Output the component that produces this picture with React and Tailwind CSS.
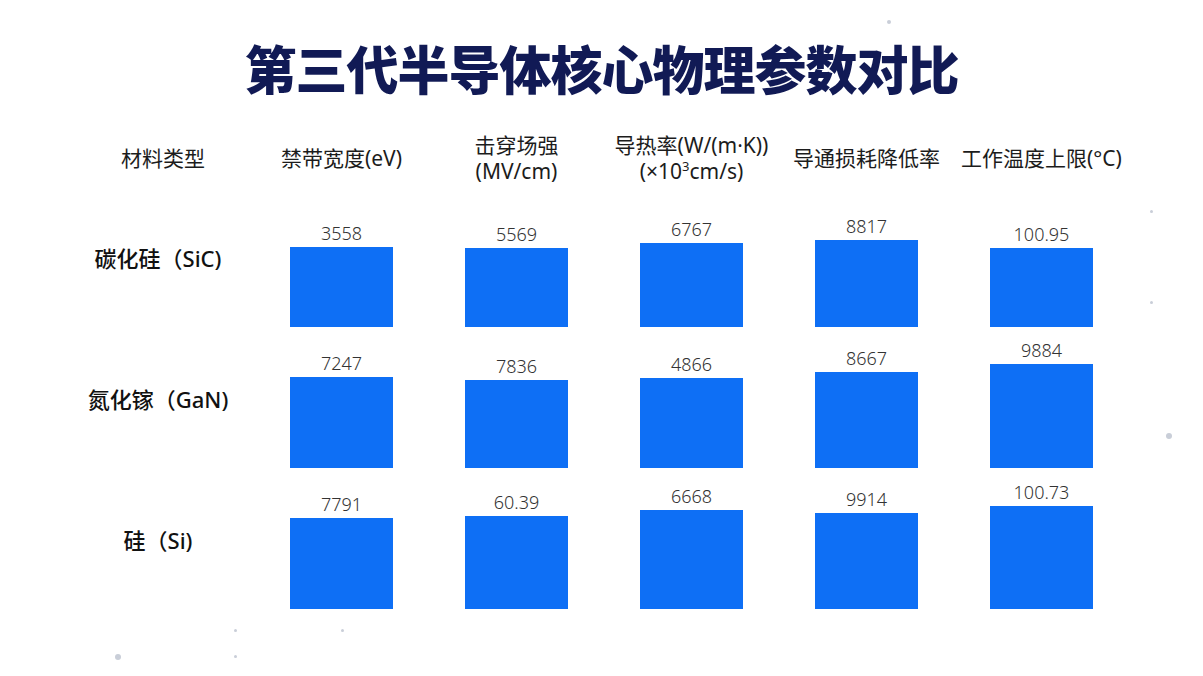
const columns = [
  { key: "band", label: ["禁带宽度(eV)"] },
  { key: "field", label: ["击穿场强", "(MV/cm)"] },
  { key: "thermal", label: ["导热率(W/(m·K))", "(×10³cm/s)"] },
  { key: "loss", label: ["导通损耗降低率"] },
  { key: "temp", label: ["工作温度上限(°C)"] },
];

const rows = [
  {
    name: "碳化硅（SiC)",
    cells: [
      { value: "3558", h: 80 },
      { value: "5569", h: 79 },
      { value: "6767", h: 84 },
      { value: "8817", h: 87 },
      { value: "100.95", h: 79 },
    ],
  },
  {
    name: "氮化镓（GaN)",
    cells: [
      { value: "7247", h: 91 },
      { value: "7836", h: 88 },
      { value: "4866", h: 90 },
      { value: "8667", h: 96 },
      { value: "9884", h: 104 },
    ],
  },
  {
    name: "硅（Si)",
    cells: [
      { value: "7791", h: 91 },
      { value: "60.39", h: 93 },
      { value: "6668", h: 99 },
      { value: "9914", h: 96 },
      { value: "100.73", h: 103 },
    ],
  },
];

const dots = [
  "left-[887px] top-[20px] h-[4px] w-[4px]",
  "left-[1150px] top-[210px] h-[3px] w-[3px]",
  "left-[1150px] top-[301px] h-[3px] w-[3px]",
  "left-[1166px] top-[433px] h-[6px] w-[6px]",
  "left-[115px] top-[654px] h-[6px] w-[6px]",
  "left-[234px] top-[629px] h-[3px] w-[3px]",
  "left-[234px] top-[655px] h-[3px] w-[3px]",
  "left-[341px] top-[629px] h-[3px] w-[3px]",
];

function HeaderText({ lines }) {
  return (
    <div className="flex flex-col items-center text-center">
      {lines.map((line) =>
        line === "(×10³cm/s)" ? (
          <span key={line}>
            (×10<span className="relative -top-[8px] text-[13px] leading-none">3</span>cm/s)
          </span>
        ) : (
          <span key={line}>{line}</span>
        )
      )}
    </div>
  );
}

export default function App() {
  return (
    <div
      className="relative h-[676px] w-full overflow-hidden bg-white"
      style={{ fontFamily: '"Noto Sans", "Noto Sans CJK SC", sans-serif' }}
    >
      {dots.map((d) => (
        <span key={d} className={`absolute rounded-full bg-[#c9ced8] ${d}`} />
      ))}

      <h1
        className="pt-[38px] text-center text-[52px] font-black leading-[60px] tracking-[-1px] text-[#111a55]"
        style={{ fontFamily: '"Noto Sans CJK SC", sans-serif' }}
      >
        第三代半导体核心物理参数对比
      </h1>

      <div className="ml-[62px] mt-[32px] grid grid-cols-[192px_repeat(5,175px)] text-[#1c1c1c]">
        <div className="flex h-[56px] items-center justify-center pl-[10px] text-[21px] leading-[26px]">材料类型</div>
        {columns.map((c) => (
          <div key={c.key} className="flex h-[56px] items-center justify-center text-[21px] leading-[26px]">
            <HeaderText lines={c.label} />
          </div>
        ))}

        {rows.map((row) => (
          <div key={row.name} className="contents">
            <div className="flex h-[141px] items-center justify-center pt-[4px] text-[22px] font-medium text-[#111]">
              {row.name}
            </div>
            {row.cells.map((cell, i) => (
              <div key={i} className="flex h-[141px] flex-col items-center justify-end">
                <span className="mb-[3px] text-[18px] font-light leading-[22px] text-[#333]">{cell.value}</span>
                <div className="w-[103px] bg-[#0e6ff5]" style={{ height: cell.h }} />
              </div>
            ))}
          </div>
        ))}
      </div>
    </div>
  );
}
